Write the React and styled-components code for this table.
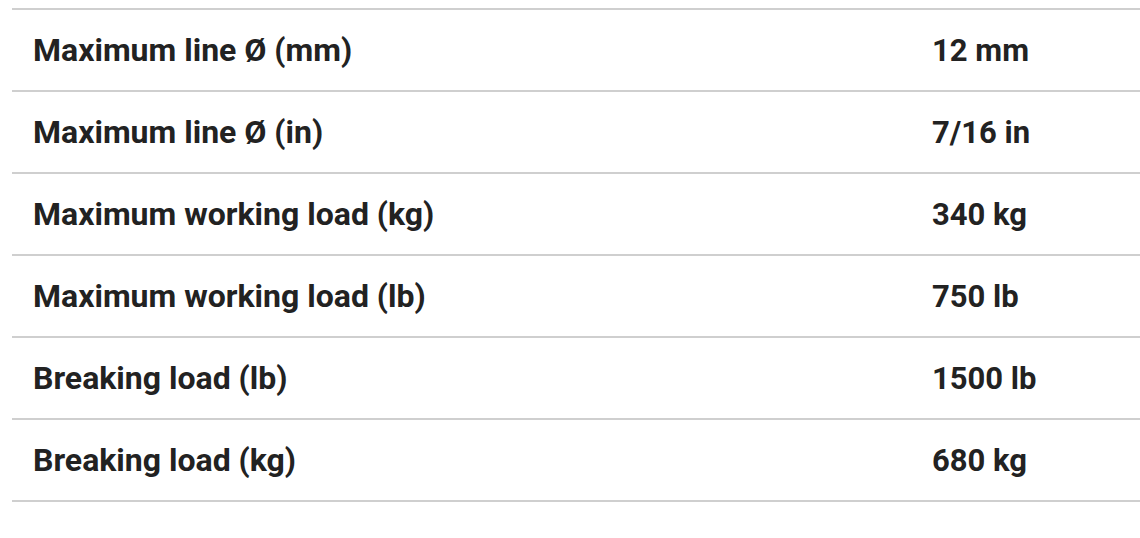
import React from "react";
import styled, { createGlobalStyle } from "styled-components";

const GlobalStyle = createGlobalStyle`
  html, body {
    margin: 0;
    padding: 0;
    background: #ffffff;
  }
  body {
    font-family: Roboto, "Liberation Sans", sans-serif;
  }
`;

const Page = styled.div`
  padding: 8px 0 0 12px;
  width: 1140px;
  box-sizing: border-box;
`;

const Table = styled.div`
  border-top: 2px solid #cfcfcf;
  width: 1140px;
`;

const Row = styled.div`
  display: grid;
  grid-template-columns: 899px 1fr;
  align-items: center;
  height: 80px;
  border-bottom: 2px solid #cfcfcf;
  padding-left: 21px;
`;

const Cell = styled.div`
  font-size: ${(props) => (props.$label ? "32px" : "31px")};
  font-weight: 700;
  color: #222222;
  white-space: nowrap;
`;

const specs = [
  ["Maximum line Ø (mm)", "12 mm"],
  ["Maximum line Ø (in)", "7/16 in"],
  ["Maximum working load (kg)", "340 kg"],
  ["Maximum working load (lb)", "750 lb"],
  ["Breaking load (lb)", "1500 lb"],
  ["Breaking load (kg)", "680 kg"],
];

const App = () => {
  return (
    <>
      <GlobalStyle />
      <Page>
        <Table>
          {specs.map(([label, value]) => (
            <Row key={label}>
              <Cell $label>{label}</Cell>
              <Cell>{value}</Cell>
            </Row>
          ))}
        </Table>
      </Page>
    </>
  );
};

export default App;
